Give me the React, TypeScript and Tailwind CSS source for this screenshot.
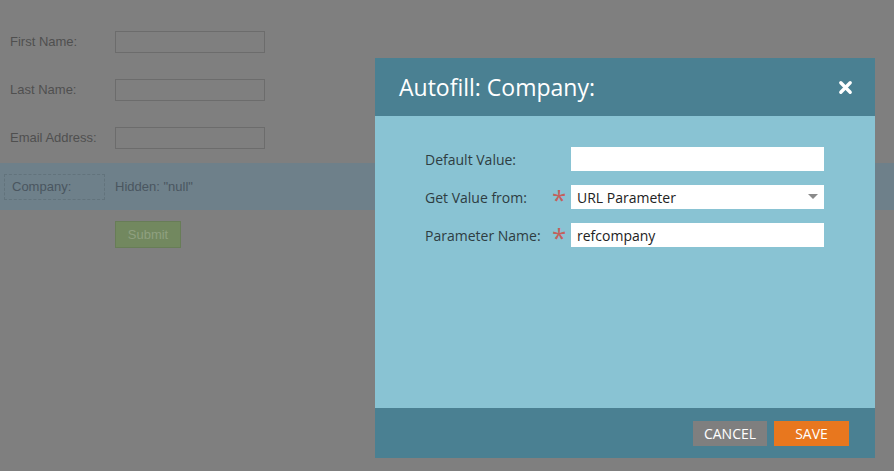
import React from "react"

const bgFont = { fontFamily: '"Liberation Sans", Arial, sans-serif' }
const modalFont = { fontFamily: '"Open Sans", "Noto Sans", sans-serif' }

function BgRow({ label }: { label: string }) {
  return (
    <div className="flex items-center h-[22px] mb-[26px]">
      <div className="w-[115px] pl-[10px] text-[13px] text-[#4f4f4f]">{label}</div>
      <div className="w-[150px] h-[22px] border border-[#6c6c6c]" />
    </div>
  )
}

function Field({ label, required, children }: { label: string; required?: boolean; children: React.ReactNode }) {
  return (
    <div className="flex items-center h-[24px]">
      <div className="w-[127px] text-[14px] text-[#2e3d42]">{label}</div>
      <div className="w-[19px] h-[24px] text-[#c4605c] text-[26px] leading-none pt-[1px]">{required ? "*" : ""}</div>
      {children}
    </div>
  )
}

export default function App() {
  return (
    <div className="relative w-[894px] h-[471px] bg-[#7f7f7f] overflow-hidden">
      {/* background form, dimmed */}
      <div className="pt-[31px]" style={bgFont}>
        <BgRow label="First Name:" />
        <BgRow label="Last Name:" />
        <BgRow label="Email Address:" />
        <div className="h-[47px] mt-[-12px] bg-[#6e808a] flex items-center">
          <div className="ml-[4px] w-[101px] h-[26px] border border-dashed border-[#62737c] flex items-center pl-[7px] text-[13px] text-[#4a5660]">
            Company:
          </div>
          <div className="ml-[10px] text-[13px] text-[#4a5660]">Hidden: "null"</div>
        </div>
        <div className="mt-[11px] ml-[115px] w-[66px] h-[27px] bg-[#72885f] border border-[#687d57] flex items-center justify-center text-[13px] text-[#8fa07f]">
          Submit
        </div>
      </div>

      {/* modal */}
      <div className="absolute left-[375px] top-[58px] w-[500px] h-[400px] flex flex-col" style={modalFont}>
        <div className="h-[58px] bg-[#4a8092] flex items-center justify-between pl-[24px] pr-[22px]">
          <div className="text-white text-[23px]">Autofill: Company:</div>
          <svg width="15" height="15" viewBox="0 0 16 16">
            <path d="M3 3 L13 13 M13 3 L3 13" stroke="white" strokeWidth="3.6" strokeLinecap="round" />
          </svg>
        </div>
        <div className="flex-1 bg-[#89c3d3] pl-[50px] pt-[31px] flex flex-col gap-[14px]">
          <Field label="Default Value:">
            <div className="w-[253px] h-[24px] bg-white" />
          </Field>
          <Field label="Get Value from:" required>
            <div className="w-[253px] h-[24px] bg-white flex items-center justify-between pl-[6px] pr-[6px] text-[14px] text-[#222]">
              <span>URL Parameter</span>
              <svg width="10" height="6" viewBox="0 0 10 6">
                <path d="M0 0 L10 0 L5 5 Z" fill="#8a8a8a" />
              </svg>
            </div>
          </Field>
          <Field label="Parameter Name:" required>
            <div className="w-[253px] h-[24px] bg-white flex items-center pl-[6px] text-[14px] text-[#222]">refcompany</div>
          </Field>
        </div>
        <div className="h-[50px] bg-[#4a8092] flex items-center justify-end pr-[26px] gap-[7px]">
          <div className="w-[74px] h-[25px] bg-[#7f7f7f] text-white text-[14px] flex items-center justify-center">CANCEL</div>
          <div className="w-[75px] h-[25px] bg-[#e8771e] text-white text-[14px] flex items-center justify-center">SAVE</div>
        </div>
      </div>
    </div>
  )
}
